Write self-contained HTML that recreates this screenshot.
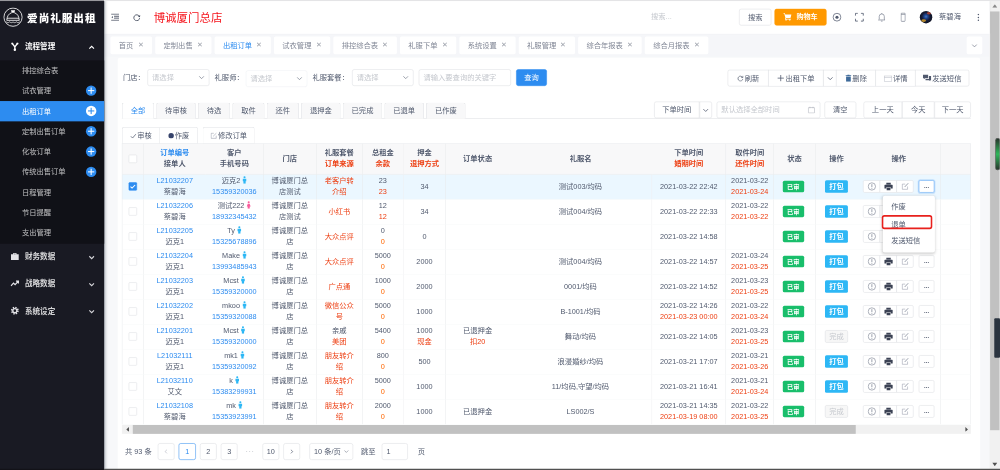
<!DOCTYPE html>
<html lang="zh-CN">
<head>
<meta charset="utf-8">
<title>爱尚礼服出租 - 出租订单</title>
<style>
*{box-sizing:border-box;margin:0;padding:0}
html,body{width:1000px;height:470px;overflow:hidden;background:#f7f8fa}
body{font-family:"Liberation Sans","Noto Sans CJK SC",sans-serif;font-size:14px;color:#515a6e;line-height:1.5}
#root{position:absolute;left:0;top:0;width:1920px;height:903px;transform:scale(0.5208333);transform-origin:0 0;filter:blur(0.800px);overflow:hidden;background:#f7f8fa}
.abs{position:absolute}
/* sidebar */
#side{position:absolute;left:0;top:0;width:200px;height:903px;background:#191a23;color:#fff;z-index:8;box-shadow:2px 0 6px rgba(0,21,41,.35)}
#logo{position:absolute;left:0;top:0;width:200px;height:64px}
#logo svg{position:absolute;left:6px;top:14px}
#logo b{position:absolute;left:52px;top:19px;font-size:20.5px;line-height:32px;font-weight:900;letter-spacing:1.7px;color:#fff;white-space:nowrap}
.m1{position:absolute;left:0;width:200px;height:52px;line-height:52px;color:#fff;font-size:14.5px;font-weight:700}
.m1 .ic{position:absolute;left:20px;top:17px;width:17px;height:17px}
.m1.dim{color:rgba(255,255,255,.82)}
.m1 span{position:absolute;left:48px;top:0}
.m1 .ar{position:absolute;left:170px;top:21px;width:12px;height:12px}
#sub{position:absolute;left:0;top:116px;width:200px;height:352px;background:#101117}
.m2{position:absolute;left:0;width:200px;height:39px;line-height:39px;color:rgba(255,255,255,.72);font-size:14px}
.m2 span{position:absolute;left:42px}
.m2.on{background:#2d8cf0;color:#fff}
.m2 i{position:absolute;left:165px;top:9px;width:20px;height:20px;border-radius:50%;background:#2d8cf0}
.m2.on i{background:#fff}
.m2 i:before{content:"";position:absolute;left:4px;top:9px;width:12px;height:2px;background:#fff}
.m2 i:after{content:"";position:absolute;left:9px;top:4px;width:2px;height:12px;background:#fff}
.m2.on i:before,.m2.on i:after{background:#2d8cf0}
/* header */
#head{position:absolute;left:200px;top:0;width:1700px;height:65px;z-index:5;background:#fff;box-shadow:0 1px 4px rgba(0,21,41,.08)}
#topline{position:absolute;left:0;top:0;width:1920px;height:2px;background:linear-gradient(90deg,#98989d 0,#98989d 200px,#e4e4e6 200px);z-index:9}
#title{position:absolute;left:95px;top:19px;font-size:22px;line-height:32px;color:#f5141c;white-space:nowrap}
.hbtn{position:absolute;top:17px;height:32px;line-height:30px;border:1px solid #dcdee2;border-radius:4px;text-align:center;font-size:14px;color:#515a6e;background:#fff}
/* page tabs */
#ptabs{position:absolute;left:200px;top:64px;width:1700px;height:45px;background:#f5f6f9}
.ptab{position:absolute;top:70px;height:34px;line-height:34px;background:#fff;border-radius:3px;color:#808695;font-size:14px;white-space:nowrap}
.ptab span{position:absolute;left:16px}
.ptab i{position:absolute;right:17px;top:0;font-style:normal;font-size:12.5px;color:#9a9fa9}
.ptab.act{color:#2d8cf0}
/* card */
#card{position:absolute;left:226px;top:111px;width:1656px;height:800px;background:#fff;border-radius:4px}
.lbl{position:absolute;top:133px;height:32px;line-height:32px;color:#515a6e;font-size:14px;white-space:nowrap}
.sel,.inp{position:absolute;height:32px;border:1px solid #dcdee2;border-radius:4px;background:#fff;line-height:30px;color:#c5c8ce;font-size:14px;padding-left:8px;white-space:nowrap}
.sel svg{position:absolute;right:8px;top:9px}
.btn{position:absolute;height:32px;line-height:30px;border:1px solid #dcdee2;background:#fff;color:#515a6e;font-size:14px;text-align:center;white-space:nowrap;border-radius:4px}
.btn.pri{background:#2d8cf0;border-color:#2d8cf0;color:#fff}
.btn svg{vertical-align:-2px;margin-right:2px}
.grp .btn{border-radius:0;margin-left:-1px}
.stab{position:absolute;top:197px;height:31px;line-height:28px;border:1px solid #dcdee2;border-bottom:0;border-radius:4px 4px 0 0;background:#f8f8f9;color:#515a6e;text-align:center;font-size:14px}
.stab.on{background:#fff;color:#2d8cf0;height:31px;z-index:2}
#stline{position:absolute;left:234px;top:227px;width:1630px;height:1px;background:#dcdee2}
/* table */
#tbl{position:absolute;left:234px;top:275px;width:1630px;border-collapse:separate;border-spacing:0;table-layout:fixed;font-size:14px;color:#515a6e;border-top:1px solid #e8eaec;border-left:1px solid #e8eaec}
#tbl th{height:59px;font-weight:700;text-align:center;line-height:21px;padding-bottom:2px !important;border-bottom:1px solid #e8eaec;color:#515a6e;padding:0;white-space:nowrap}
#tbl td{height:48px;text-align:center;line-height:21.5px;padding:0;border-bottom:1px solid #f7f8f9;white-space:nowrap;vertical-align:middle}
#tbl tr>:nth-child(1),#tbl tr>:nth-child(3),#tbl tr>:nth-child(4),#tbl tr>:nth-child(5),#tbl tr>:nth-child(7),#tbl tr>:nth-child(10),#tbl tr>:nth-child(11),#tbl tr>:nth-child(12),#tbl tr>:nth-child(14),#tbl tr>:nth-child(15){border-right:1px solid #e8eaec}
#tbl tr>:nth-child(6),#tbl td:nth-child(9){border-right:1px solid #eff0f2}

.blue{color:#2d8cf0}.red{color:#ed4014}.org{color:#f60}
td.store,td.src{white-space:normal !important}
#tbl td.two{padding-bottom:3px}
#tbl td.nb{padding-bottom:2px}
td.store{padding:0 10px 3px !important}
td.src{padding:0 12px !important}
td.src.two{padding:0 12px 3px !important}
.cb{display:inline-block;width:16px;height:16px;border:1px solid #dcdee2;border-radius:2px;background:#fff;vertical-align:middle}
.cb.on{background:#2d8cf0;border-color:#2d8cf0;position:relative}
.cb.on svg{position:absolute;left:-1px;top:-1px}
.sex{vertical-align:-2px}
.sex.m{fill:#2db7f5}.sex.f{fill:#f95d9c}
.sbtn{display:inline-block;height:24px;line-height:24px;border-radius:3px;color:#fff;font-weight:700;vertical-align:middle}
.sbtn.ok{background:#19be6b;margin-right:5px;width:41px;height:22px;line-height:22px;font-size:12px}
.sbtn.info{background:#2db7f5;width:44px;font-size:14px}
.sbtn.dis{background:#f7f7f7;border:1px solid #dcdee2;color:#c5c8ce;width:44px;line-height:22px;font-weight:400}
.agrp{display:inline-block;vertical-align:middle;height:24px;white-space:nowrap;font-size:0}
.mbtn{display:inline-block;width:33px;height:24px;border:1px solid #dcdee2;background:#fff;vertical-align:middle;margin-left:-1px;position:relative}
.agrp .mbtn:first-child{border-radius:3px 0 0 3px;margin-left:0}
.agrp .mbtn:last-child{border-radius:0 3px 3px 0}
.mbtn svg{position:absolute;left:50%;top:50%;transform:translate(-50%,-50%)}
.mbtn.more{width:30px;border-radius:3px;margin-left:10px;font-size:11px;line-height:22px;color:#515a6e;font-weight:700;letter-spacing:-.5px;text-align:center}
.mbtn.more.focus{border-color:#57a3f3;box-shadow:0 0 0 2px rgba(45,140,240,.2)}
/* dropdown */
#drop{position:absolute;left:1695px;top:376px;width:100px;height:109px;background:#fff;border-radius:4px;box-shadow:0 1px 6px rgba(0,0,0,.2);z-index:20;padding-top:5px}
#drop div{height:32.600px;line-height:32.600px;padding-left:16px;font-size:14px;color:#515a6e}
#redbox{position:absolute;left:1693px;top:413px;width:97px;height:27px;border:3px solid #e8211d;border-radius:5px;z-index:21}
/* pagination */
.pg{position:absolute;top:851px;height:32px;min-width:32px;line-height:30px;border:1px solid #dcdee2;border-radius:4px;background:#fff;text-align:center;font-size:14px;color:#515a6e}
.pg.on{border-color:#2d8cf0;color:#2d8cf0}
.pt{position:absolute;top:851px;height:32px;line-height:32px;font-size:14px;color:#515a6e;white-space:nowrap}
/* scrollbars */
#hscroll{position:absolute;left:234px;top:816px;width:1630px;height:17px;background:#f1f1f1}
#hscroll .th{position:absolute;left:21px;top:0px;width:1388px;height:17px;background:#c1c1c1}
#vscroll{position:absolute;left:1900px;top:0;width:20px;height:903px;background:#f1f1f1}
#vscroll .th{position:absolute;left:1px;top:22px;width:18px;height:804px;background:#c1c1c1}
#botline{position:absolute;left:0;top:900px;width:1920px;height:3px;background:linear-gradient(90deg,#121218 0,#121218 200px,#505050 200px);z-index:30}
</style>
</head>
<body>
<div id="root">

<!-- ============ sidebar ============ -->
<div id="side">
  <div id="logo">
    <svg width="38" height="38" viewBox="0 0 38 38" fill="none" stroke="#fff" stroke-width="1.6">
      <circle cx="19" cy="19" r="17.5"/>
      <path d="M15 5.5h8l-1.5 5h-5z" fill="#fff" stroke="none"/>
      <path d="M16.5 10.5c-6 1.5-9 7-9.500 14.500h24c-.5-7.500-3.500-13-9.500-14.500"/>
      <path d="M7.500 21h23"/>
      <path d="M6 28c2 2 4 2 6.500 0 2.500 2 4.500 2 6.500 0 2 2 4 2 6.500 0 2.500 2 4.500 2 6.500 0" stroke-width="1.3"/>
    </svg>
    <b>爱尚礼服出租</b>
  </div>
  <div class="m1" style="top:64px">
    <svg class="ic" viewBox="0 0 16 16" fill="none" stroke="#fff" stroke-width="2.600"><path d="M3.500 2.500l4.500 6 4.500-6M8 8V13"/><circle cx="3.300" cy="2.300" r="1.900" fill="#fff" stroke="none"/><circle cx="12.700" cy="2.300" r="1.900" fill="#fff" stroke="none"/><circle cx="8" cy="13.600" r="2.200" fill="#fff" stroke="none"/></svg>
    <span>流程管理</span>
    <svg class="ar" viewBox="0 0 12 12" fill="none" stroke="#fff" stroke-width="2.200"><path d="M1.500 8.500L6 4l4.500 4.500"/></svg>
  </div>
  <div id="sub">
    <div class="m2" style="top:0"><span>排控综合表</span></div>
    <div class="m2" style="top:39px"><span>试衣管理</span><i></i></div>
    <div class="m2 on" style="top:78px"><span>出租订单</span><i></i></div>
    <div class="m2" style="top:117px"><span>定制出售订单</span><i></i></div>
    <div class="m2" style="top:156px"><span>化妆订单</span><i></i></div>
    <div class="m2" style="top:195px"><span>传统出售订单</span><i></i></div>
    <div class="m2" style="top:234px"><span>日程管理</span></div>
    <div class="m2" style="top:273px"><span>节日提醒</span></div>
    <div class="m2" style="top:312px"><span>支出管理</span></div>
  </div>
  <div class="m1 dim" style="top:467px">
    <svg class="ic" viewBox="0 0 16 16" fill="#e4e4e8"><path d="M5 1.500h6V4h4v10.500H1V4h4zM6.600 2.900V4h2.800V2.900z"/></svg>
    <span>财务数据</span>
    <svg class="ar" viewBox="0 0 12 12" fill="none" stroke="#d4d4d8" stroke-width="2.200"><path d="M1.500 4L6 8.500 10.500 4"/></svg>
  </div>
  <div class="m1 dim" style="top:519px">
    <svg class="ic" viewBox="0 0 16 16" fill="none" stroke="#e4e4e8" stroke-width="2.200"><path d="M1 12l4.500-5 3 3L14 4M10 3.500h4.500V8"/></svg>
    <span>战略数据</span>
    <svg class="ar" viewBox="0 0 12 12" fill="none" stroke="#d4d4d8" stroke-width="2.200"><path d="M1.500 4L6 8.500 10.500 4"/></svg>
  </div>
  <div class="m1 dim" style="top:571px">
    <svg class="ic" viewBox="0 0 16 16" fill="none" stroke="#e0e0e4"><circle cx="8" cy="8" r="5.600" stroke-width="3" stroke-dasharray="2.500 1.900"/><circle cx="8" cy="8" r="3.700" stroke-width="2.600"/></svg>
    <span>系统设定</span>
    <svg class="ar" viewBox="0 0 12 12" fill="none" stroke="#d4d4d8" stroke-width="2.200"><path d="M1.500 4L6 8.500 10.500 4"/></svg>
  </div>
</div>

<!-- ============ header ============ -->
<div id="head">
  <svg class="abs" style="left:13px;top:26px" width="16" height="14" viewBox="0 0 16 14" fill="none" stroke="#3f4759" stroke-width="1.700"><path d="M.5 1h15M6 5.200h9.500M6 8.800h9.500M.5 13h15"/><path d="M3.600 4.800L1 7l2.600 2.200z" fill="#3f4759" stroke="none"/></svg>
  <svg class="abs" style="left:55px;top:26px" width="15" height="15" viewBox="0 0 16 16" fill="none" stroke="#3f4759" stroke-width="1.700"><path d="M13.200 5.500A6 6 0 1 0 14 9.500"/><path d="M15.500 3.200l-1 4.300-4-1.600z" fill="#3f4759" stroke="none"/></svg>
  <div id="title">博诚厦门总店</div>
  <div class="abs" style="left:1050px;top:22px;color:#c5c8ce;font-size:14px">搜索...</div>
  <div class="hbtn" style="left:1219px;width:62px">搜索</div>
  <div class="hbtn" style="left:1287px;width:100px;background:#ff9900;border-color:#ff9900;color:#fff;font-weight:700;font-size:13.500px"><svg width="16" height="15" viewBox="0 0 16 15" style="vertical-align:-3px;margin-right:9px" fill="#fff"><path d="M0 .5h3l.7 2.300h12l-2 6.700H5.300l-.2 1.300h9.400v1.500H3.300l.6-3.200L2 2H0zM5.200 12.200a1.400 1.400 0 1 0 0 2.800 1.400 1.400 0 0 0 0-2.800zM12.300 12.200a1.400 1.400 0 1 0 0 2.800 1.400 1.400 0 0 0 0-2.800z"/></svg>购物车</div>
  <svg class="abs" style="left:1398px;top:24px" width="18" height="18" viewBox="0 0 18 18" fill="none" stroke="#515a6e" stroke-width="1.400"><circle cx="9" cy="9" r="7.500"/><circle cx="9" cy="9" r="3" fill="#515a6e" stroke="none"/></svg>
  <svg class="abs" style="left:1441px;top:24px" width="18" height="18" viewBox="0 0 18 18" fill="none" stroke="#515a6e" stroke-width="1.600"><path d="M1.500 6V1.500H6M12 1.500h4.500V6M16.500 12v4.500H12M6 16.500H1.500V12"/></svg>
  <svg class="abs" style="left:1485px;top:24px" width="16" height="18" viewBox="0 0 18 20" fill="none" stroke="#7a8191" stroke-width="1.500"><path d="M3.500 14.500V8.500a5.500 5.500 0 0 1 11 0v6l1.500 1.500H2zM7.200 18.500h3.600M9 1v2"/></svg>
  <svg class="abs" style="left:1529px;top:24px" width="10" height="18" viewBox="0 0 10 18" fill="none" stroke="#7a8191" stroke-width="1.400"><rect x="1" y="1" width="8" height="16" rx="1.500"/><path d="M1 3.500h8"/></svg>
  <div class="abs" style="left:1566px;top:21px;width:24px;height:24px;border-radius:50%;background:radial-gradient(circle at 50% 45%,#3a78c8 0,#1f3f86 22%,#141a33 45%,#0b0d16 100%);overflow:hidden">
    <div class="abs" style="left:14px;top:2px;width:7px;height:5px;border-radius:50%;background:#b8432f;opacity:.85"></div>
    <div class="abs" style="left:3px;top:16px;width:9px;height:5px;border-radius:50%;background:#c9962a;opacity:.9"></div>
  </div>
  <div class="abs" style="left:1603px;top:21px;font-size:14px;color:#515a6e">蔡碧海</div>
  <svg class="abs" style="left:1676px;top:26px" width="5" height="15" viewBox="0 0 5 15" fill="#515a6e"><circle cx="2.500" cy="2" r="1.400"/><circle cx="2.500" cy="7.500" r="1.400"/><circle cx="2.500" cy="13" r="1.400"/></svg>
</div>

<!-- ============ page tabs ============ -->
<div id="ptabs"></div>
<div class="ptab" style="left:212px;width:80px"><span>首页</span><i>✕</i></div><div class="ptab" style="left:298px;width:108px"><span>定制出售</span><i>✕</i></div><div class="ptab act" style="left:412px;width:108px"><span>出租订单</span><i>✕</i></div><div class="ptab" style="left:526px;width:108px"><span>试衣管理</span><i>✕</i></div><div class="ptab" style="left:640px;width:122px"><span>排控综合表</span><i>✕</i></div><div class="ptab" style="left:768px;width:108px"><span>礼服下单</span><i>✕</i></div><div class="ptab" style="left:882px;width:108px"><span>系统设置</span><i>✕</i></div><div class="ptab" style="left:996px;width:108px"><span>礼服管理</span><i>✕</i></div><div class="ptab" style="left:1110px;width:122px"><span>综合年报表</span><i>✕</i></div><div class="ptab" style="left:1238px;width:122px"><span>综合月报表</span><i>✕</i></div>
<div class="abs" style="left:1856px;top:70px;width:30px;height:34px;background:#fff;border-radius:3px">
  <svg class="abs" style="left:9px;top:12px" width="12" height="12" viewBox="0 0 12 12" fill="none" stroke="#808695" stroke-width="1.500"><path d="M1.500 3.500L6 8l4.500-4.500"/></svg>
</div>

<!-- ============ card ============ -->
<div id="card"></div>

<!-- filter row -->
<div class="lbl" style="left:236px">门店：</div>
<div class="sel" style="left:283px;top:133px;width:119px">请选择<svg width="12" height="12" viewBox="0 0 12 12" fill="none" stroke="#808695" stroke-width="1.500"><path d="M1.500 3.500L6 8l4.500-4.500"/></svg></div>
<div class="lbl" style="left:412px">礼服师：</div>
<div class="sel" style="left:472px;top:135px;width:118px;border-color:#eef0f3">请选择<svg width="12" height="12" viewBox="0 0 12 12" fill="none" stroke="#808695" stroke-width="1.500"><path d="M1.500 3.500L6 8l4.500-4.500"/></svg></div>
<div class="lbl" style="left:600px">礼服套餐：</div>
<div class="sel" style="left:676px;top:133px;width:118px">请选择<svg width="12" height="12" viewBox="0 0 12 12" fill="none" stroke="#808695" stroke-width="1.500"><path d="M1.500 3.500L6 8l4.500-4.500"/></svg></div>
<div class="inp" style="left:804px;top:133px;width:177px">请输入要查询的关键字</div>
<div class="btn pri" style="left:991px;top:133px;width:59px">查询</div>

<!-- top-right button group -->
<div class="grp">
  <div class="btn" style="left:1398px;top:134px;width:79px;border-radius:4px 0 0 4px"><svg width="13" height="13" viewBox="0 0 14 14" fill="none" stroke="#515a6e" stroke-width="1.400"><path d="M11.500 5A5 5 0 1 0 12 8.500"/><path d="M12.200 1.800v3.500H8.700"/></svg>刷新</div>
  <div class="btn" style="left:1476px;top:134px;width:106px"><svg width="14" height="14" viewBox="0 0 14 14" fill="none" stroke="#515a6e" stroke-width="1.500"><path d="M7 1v12M1 7h12"/></svg>出租下单</div>
  <div class="btn" style="left:1582px;top:134px;width:25px"><svg width="12" height="12" viewBox="0 0 12 12" fill="none" stroke="#515a6e" stroke-width="1.500" style="margin:0"><path d="M1.500 3.500L6 8l4.500-4.500"/></svg></div>
  <div class="btn" style="left:1606px;top:134px;width:77px"><svg width="12" height="14" viewBox="0 0 12 14" fill="#3e6a9a"><path d="M4 0h4v1.500h3.500V3H.5V1.500H4zM1.500 4h9v10h-9z"/></svg>删除</div>
  <div class="btn" style="left:1682px;top:134px;width:77px"><svg width="16" height="12" viewBox="0 0 16 12" fill="none" stroke="#b8bcc6" stroke-width="1.200"><rect x=".6" y=".6" width="14.800" height="10.800"/><path d="M.6 3.500h14.800"/></svg>详情</div>
  <div class="btn" style="left:1758px;top:134px;width:104px;border-radius:0 4px 4px 0"><svg width="16" height="14" viewBox="0 0 16 14" fill="#515a6e"><path d="M0 0h10v7H4L2 9V7H0zM5 8.500h6.500V3H16v8h-2v2l-2-2H5z"/></svg>发送短信</div>
</div>

<!-- status tabs -->
<div id="stline"></div>
<div class="stab on" style="left:234px;width:62px">全部</div>
<div class="stab" style="left:300px;width:76px">待审核</div>
<div class="stab" style="left:380px;width:62px">待选</div>
<div class="stab" style="left:446px;width:62px">取件</div>
<div class="stab" style="left:512px;width:62px">还件</div>
<div class="stab" style="left:578px;width:76px">退押金</div>
<div class="stab" style="left:658px;width:76px">已完成</div>
<div class="stab" style="left:738px;width:76px">已退单</div>
<div class="stab" style="left:818px;width:76px">已作废</div>

<!-- right of status tabs -->
<div class="grp">
  <div class="btn" style="left:1257px;top:195px;width:87px;border-radius:4px 0 0 4px">下单时间</div>
  <div class="btn" style="left:1344px;top:195px;width:24px;border-radius:0 4px 4px 0"><svg width="12" height="12" viewBox="0 0 12 12" fill="none" stroke="#515a6e" stroke-width="1.500" style="margin:0"><path d="M1.500 3.500L6 8l4.500-4.500"/></svg></div>
</div>
<div class="inp" style="left:1376px;top:195px;width:199px">默认选择全部时间<svg class="abs" style="right:9px;top:8px" width="14" height="14" viewBox="0 0 14 14" fill="none" stroke="#b0b4bd" stroke-width="1.200"><rect x="1" y="2.500" width="12" height="10.500" rx="1"/><path d="M4 .8v3M10 .8v3"/></svg></div>
<div class="btn" style="left:1583px;top:195px;width:61px">清空</div>
<div class="grp">
  <div class="btn" style="left:1659px;top:195px;width:74px;border-radius:4px 0 0 4px">上一天</div>
  <div class="btn" style="left:1733px;top:195px;width:62px">今天</div>
  <div class="btn" style="left:1795px;top:195px;width:70px;border-radius:0 4px 4px 0">下一天</div>
</div>

<!-- buttons above table -->
<div class="grp">
  <div class="btn" style="left:235px;top:244px;width:73px;border-radius:4px 0 0 0;border-bottom-color:#e8eaec"><svg width="12" height="12" viewBox="0 0 12 12" fill="none" stroke="#515a6e" stroke-width="1.400"><path d="M1 6.500L4.500 10 11 2.500"/></svg>审核</div>
  <div class="btn" style="left:307px;top:244px;width:74px;border-radius:0 4px 0 0;border-bottom-color:#e8eaec"><svg width="11" height="11" viewBox="0 0 14 14" fill="#36436b" style="vertical-align:-1px"><circle cx="7" cy="7" r="6.800"/></svg>作废</div>
</div>
<div class="btn" style="left:389px;top:244px;width:100px;border-radius:4px 4px 0 0;border-bottom-color:#e8eaec"><svg width="13" height="13" viewBox="0 0 14 14" fill="none" stroke="#9aa0ae" stroke-width="1.200"><path d="M12 7v5.500H1.500V2H7"/><path d="M5.500 8.500L12.500 1.500"/></svg>修改订单</div>

<!-- ============ table ============ -->
<div class="abs" style="left:234px;top:276px;width:1630px;height:59px;background:#f8f8f9"></div>
<div class="abs" style="left:234px;top:335px;width:1630px;height:48px;background:#ebf7ff"></div>
<table id="tbl">
<colgroup><col style="width:41px"><col style="width:119px"><col style="width:111px"><col style="width:102px"><col style="width:88px"><col style="width:79px"><col style="width:81px"><col style="width:122px"><col style="width:274px"><col style="width:142px"><col style="width:92px"><col style="width:80px"><col style="width:80px"><col style="width:160px"><col></colgroup>
<thead><tr>
<th><span class="cb"></span></th>
<th><div class="blue">订单编号</div><div>接单人</div></th>
<th><div>客户</div><div>手机号码</div></th>
<th>门店</th>
<th><div>礼服套餐</div><div class="red">订单来源</div></th>
<th><div>总租金</div><div class="red">余款</div></th>
<th><div>押金</div><div class="red">退押方式</div></th>
<th>订单状态</th>
<th>礼服名</th>
<th><div>下单时间</div><div class="red">婚期时间</div></th>
<th><div>取件时间</div><div class="red">还件时间</div></th>
<th>状态</th>
<th>操作</th>
<th>操作</th>
<th></th>
</tr></thead>
<tbody>
<tr class="rsel"><td class="c0 nb"><span class="cb on"><svg viewBox="0 0 16 16" width="16" height="16"><path d="M3.6 8.2l3 3 5.8-6" fill="none" stroke="#fff" stroke-width="2"/></svg></span></td><td class="two"><div class="blue">L21032207</div><div>蔡碧海</div></td><td class="two"><div>迈克2 <svg class="sex m" viewBox="0 0 10 16" width="9" height="15"><circle cx="5" cy="2.4" r="2.2"/><path d="M1.2 5.6h7.6v5.2H7.4V16H2.6v-5.2H1.2z"/></svg></div><div class="blue">15359320036</div></td><td class="store two">博诚厦门总店测试</td><td class="src two"><div class="red">老客户转介绍</div></td><td class="two"><div>23</div><div class="red">23</div></td><td><div>34</div></td><td></td><td>测试003/均码</td><td><div>2021-03-22 22:42</div></td><td class="two"><div>2021-03-22</div><div class="red">2021-03-24</div></td><td class="nb"><span class="sbtn ok">已审</span></td><td class="nb"><span class="sbtn info">打包</span></td><td class="act nb"><span class="agrp"><span class="mbtn"><svg viewBox="0 0 16 16" width="17" height="17"><circle cx="8" cy="8" r="6.6" fill="none" stroke="#6b7385" stroke-width="1"/><path d="M8 3.8v5.6M8 10.8v1.4" stroke="#6b7385" stroke-width="1.2"/></svg></span><span class="mbtn"><svg viewBox="0 0 16 16" width="17" height="17"><path d="M4 1.5h8v3H4zM1.5 5h13a1 1 0 0 1 1 1v5.5H12V9.3H4v2.2H.5V6a1 1 0 0 1 1-1zM4.6 10.3h6.8v4.4H4.6z" fill="#3b4254"/></svg></span><span class="mbtn"><svg viewBox="0 0 16 16" width="16" height="16"><path d="M12.5 8v5.5H2.5V3.5H8" fill="none" stroke="#9097a6" stroke-width="1"/><path d="M7 9L13.8 1.8" stroke="#6b7385" stroke-width="1.3"/></svg></span></span><span class="mbtn more focus">···</span></td><td></td></tr>
<tr><td class="c0 nb"><span class="cb"></span></td><td class="two"><div class="blue">L21032206</div><div>蔡碧海</div></td><td class="two"><div>测试222 <svg class="sex f" viewBox="0 0 10 16" width="9" height="15"><circle cx="5" cy="2.4" r="2.2"/><path d="M3 5.4h4l2.2 6H7.2V16H2.8v-4.6H.8z"/></svg></div><div class="blue">18932345432</div></td><td class="store two">博诚厦门总店测试</td><td class="src"><div class="red">小红书</div></td><td class="two"><div>12</div><div class="red">12</div></td><td><div>34</div></td><td></td><td>测试004/均码</td><td><div>2021-03-22 22:33</div></td><td class="two"><div>2021-03-22</div><div class="red">2021-03-22</div></td><td class="nb"><span class="sbtn ok">已审</span></td><td class="nb"><span class="sbtn info">打包</span></td><td class="act nb"><span class="agrp"><span class="mbtn"><svg viewBox="0 0 16 16" width="17" height="17"><circle cx="8" cy="8" r="6.6" fill="none" stroke="#6b7385" stroke-width="1"/><path d="M8 3.8v5.6M8 10.8v1.4" stroke="#6b7385" stroke-width="1.2"/></svg></span><span class="mbtn"><svg viewBox="0 0 16 16" width="17" height="17"><path d="M4 1.5h8v3H4zM1.5 5h13a1 1 0 0 1 1 1v5.5H12V9.3H4v2.2H.5V6a1 1 0 0 1 1-1zM4.6 10.3h6.8v4.4H4.6z" fill="#3b4254"/></svg></span><span class="mbtn"><svg viewBox="0 0 16 16" width="16" height="16"><path d="M12.5 8v5.5H2.5V3.5H8" fill="none" stroke="#9097a6" stroke-width="1"/><path d="M7 9L13.8 1.8" stroke="#6b7385" stroke-width="1.3"/></svg></span></span><span class="mbtn more">···</span></td><td></td></tr>
<tr><td class="c0 nb"><span class="cb"></span></td><td class="two"><div class="blue">L21032205</div><div>迈克1</div></td><td class="two"><div>Ty <svg class="sex m" viewBox="0 0 10 16" width="9" height="15"><circle cx="5" cy="2.4" r="2.2"/><path d="M1.2 5.6h7.6v5.2H7.4V16H2.6v-5.2H1.2z"/></svg></div><div class="blue">15325678896</div></td><td class="store two">博诚厦门总店</td><td class="src"><div class="red">大众点评</div></td><td class="two"><div>0</div><div class="org">0</div></td><td><div>0</div></td><td></td><td></td><td><div>2021-03-22 14:58</div></td><td></td><td class="nb"><span class="sbtn ok">已审</span></td><td class="nb"><span class="sbtn info">打包</span></td><td class="act nb"><span class="agrp"><span class="mbtn"><svg viewBox="0 0 16 16" width="17" height="17"><circle cx="8" cy="8" r="6.6" fill="none" stroke="#6b7385" stroke-width="1"/><path d="M8 3.8v5.6M8 10.8v1.4" stroke="#6b7385" stroke-width="1.2"/></svg></span><span class="mbtn"><svg viewBox="0 0 16 16" width="17" height="17"><path d="M4 1.5h8v3H4zM1.5 5h13a1 1 0 0 1 1 1v5.5H12V9.3H4v2.2H.5V6a1 1 0 0 1 1-1zM4.6 10.3h6.8v4.4H4.6z" fill="#3b4254"/></svg></span><span class="mbtn"><svg viewBox="0 0 16 16" width="16" height="16"><path d="M12.5 8v5.5H2.5V3.5H8" fill="none" stroke="#9097a6" stroke-width="1"/><path d="M7 9L13.8 1.8" stroke="#6b7385" stroke-width="1.3"/></svg></span></span><span class="mbtn more">···</span></td><td></td></tr>
<tr><td class="c0 nb"><span class="cb"></span></td><td class="two"><div class="blue">L21032204</div><div>迈克1</div></td><td class="two"><div>Make <svg class="sex m" viewBox="0 0 10 16" width="9" height="15"><circle cx="5" cy="2.4" r="2.2"/><path d="M1.2 5.6h7.6v5.2H7.4V16H2.6v-5.2H1.2z"/></svg></div><div class="blue">13993485943</div></td><td class="store two">博诚厦门总店</td><td class="src"><div class="red">大众点评</div></td><td class="two"><div>5000</div><div class="org">0</div></td><td><div>2000</div></td><td></td><td>测试004/均码</td><td><div>2021-03-22 14:57</div></td><td class="two"><div>2021-03-24</div><div class="red">2021-03-25</div></td><td class="nb"><span class="sbtn ok">已审</span></td><td class="nb"><span class="sbtn info">打包</span></td><td class="act nb"><span class="agrp"><span class="mbtn"><svg viewBox="0 0 16 16" width="17" height="17"><circle cx="8" cy="8" r="6.6" fill="none" stroke="#6b7385" stroke-width="1"/><path d="M8 3.8v5.6M8 10.8v1.4" stroke="#6b7385" stroke-width="1.2"/></svg></span><span class="mbtn"><svg viewBox="0 0 16 16" width="17" height="17"><path d="M4 1.5h8v3H4zM1.5 5h13a1 1 0 0 1 1 1v5.5H12V9.3H4v2.2H.5V6a1 1 0 0 1 1-1zM4.6 10.3h6.8v4.4H4.6z" fill="#3b4254"/></svg></span><span class="mbtn"><svg viewBox="0 0 16 16" width="16" height="16"><path d="M12.5 8v5.5H2.5V3.5H8" fill="none" stroke="#9097a6" stroke-width="1"/><path d="M7 9L13.8 1.8" stroke="#6b7385" stroke-width="1.3"/></svg></span></span><span class="mbtn more">···</span></td><td></td></tr>
<tr><td class="c0 nb"><span class="cb"></span></td><td class="two"><div class="blue">L21032203</div><div>迈克1</div></td><td class="two"><div>Mcst <svg class="sex m" viewBox="0 0 10 16" width="9" height="15"><circle cx="5" cy="2.4" r="2.2"/><path d="M1.2 5.6h7.6v5.2H7.4V16H2.6v-5.2H1.2z"/></svg></div><div class="blue">15359320000</div></td><td class="store two">博诚厦门总店</td><td class="src"><div class="red">广点通</div></td><td class="two"><div>1000</div><div class="org">0</div></td><td><div>2000</div></td><td></td><td>0001/均码</td><td><div>2021-03-22 14:52</div></td><td class="two"><div>2021-03-23</div><div class="red">2021-03-25</div></td><td class="nb"><span class="sbtn ok">已审</span></td><td class="nb"><span class="sbtn info">打包</span></td><td class="act nb"><span class="agrp"><span class="mbtn"><svg viewBox="0 0 16 16" width="17" height="17"><circle cx="8" cy="8" r="6.6" fill="none" stroke="#6b7385" stroke-width="1"/><path d="M8 3.8v5.6M8 10.8v1.4" stroke="#6b7385" stroke-width="1.2"/></svg></span><span class="mbtn"><svg viewBox="0 0 16 16" width="17" height="17"><path d="M4 1.5h8v3H4zM1.5 5h13a1 1 0 0 1 1 1v5.5H12V9.3H4v2.2H.5V6a1 1 0 0 1 1-1zM4.6 10.3h6.8v4.4H4.6z" fill="#3b4254"/></svg></span><span class="mbtn"><svg viewBox="0 0 16 16" width="16" height="16"><path d="M12.5 8v5.5H2.5V3.5H8" fill="none" stroke="#9097a6" stroke-width="1"/><path d="M7 9L13.8 1.8" stroke="#6b7385" stroke-width="1.3"/></svg></span></span><span class="mbtn more">···</span></td><td></td></tr>
<tr><td class="c0 nb"><span class="cb"></span></td><td class="two"><div class="blue">L21032202</div><div>迈克1</div></td><td class="two"><div>mkoo <svg class="sex m" viewBox="0 0 10 16" width="9" height="15"><circle cx="5" cy="2.4" r="2.2"/><path d="M1.2 5.6h7.6v5.2H7.4V16H2.6v-5.2H1.2z"/></svg></div><div class="blue">15359320088</div></td><td class="store two">博诚厦门总店</td><td class="src two"><div class="red">微信公众号</div></td><td class="two"><div>5000</div><div class="org">0</div></td><td><div>1000</div></td><td></td><td>B-1001/均码</td><td class="two"><div>2021-03-22 14:26</div><div class="red">2021-03-23 00:00</div></td><td class="two"><div>2021-03-22</div><div class="red">2021-03-24</div></td><td class="nb"><span class="sbtn ok">已审</span></td><td class="nb"><span class="sbtn info">打包</span></td><td class="act nb"><span class="agrp"><span class="mbtn"><svg viewBox="0 0 16 16" width="17" height="17"><circle cx="8" cy="8" r="6.6" fill="none" stroke="#6b7385" stroke-width="1"/><path d="M8 3.8v5.6M8 10.8v1.4" stroke="#6b7385" stroke-width="1.2"/></svg></span><span class="mbtn"><svg viewBox="0 0 16 16" width="17" height="17"><path d="M4 1.5h8v3H4zM1.5 5h13a1 1 0 0 1 1 1v5.5H12V9.3H4v2.2H.5V6a1 1 0 0 1 1-1zM4.6 10.3h6.8v4.4H4.6z" fill="#3b4254"/></svg></span><span class="mbtn"><svg viewBox="0 0 16 16" width="16" height="16"><path d="M12.5 8v5.5H2.5V3.5H8" fill="none" stroke="#9097a6" stroke-width="1"/><path d="M7 9L13.8 1.8" stroke="#6b7385" stroke-width="1.3"/></svg></span></span><span class="mbtn more">···</span></td><td></td></tr>
<tr><td class="c0 nb"><span class="cb"></span></td><td class="two"><div class="blue">L21032201</div><div>迈克1</div></td><td class="two"><div>Mcst <svg class="sex m" viewBox="0 0 10 16" width="9" height="15"><circle cx="5" cy="2.4" r="2.2"/><path d="M1.2 5.6h7.6v5.2H7.4V16H2.6v-5.2H1.2z"/></svg></div><div class="blue">15359320000</div></td><td class="store two">博诚厦门总店</td><td class="src two"><div>亲戚</div><div class="red">美团</div></td><td class="two"><div>5400</div><div class="org">0</div></td><td class="two"><div>1000</div><div class="red">现金</div></td><td class="two"><div>已退押金</div><div class="red">扣20</div></td><td>舞动/均码</td><td><div>2021-03-22 14:05</div></td><td class="two"><div>2021-03-23</div><div class="red">2021-03-25</div></td><td class="nb"><span class="sbtn ok">已审</span></td><td class="nb"><span class="sbtn dis">完成</span></td><td class="act nb"><span class="agrp"><span class="mbtn"><svg viewBox="0 0 16 16" width="17" height="17"><circle cx="8" cy="8" r="6.6" fill="none" stroke="#6b7385" stroke-width="1"/><path d="M8 3.8v5.6M8 10.8v1.4" stroke="#6b7385" stroke-width="1.2"/></svg></span><span class="mbtn"><svg viewBox="0 0 16 16" width="17" height="17"><path d="M4 1.5h8v3H4zM1.5 5h13a1 1 0 0 1 1 1v5.5H12V9.3H4v2.2H.5V6a1 1 0 0 1 1-1zM4.6 10.3h6.8v4.4H4.6z" fill="#3b4254"/></svg></span><span class="mbtn"><svg viewBox="0 0 16 16" width="16" height="16"><path d="M12.5 8v5.5H2.5V3.5H8" fill="none" stroke="#9097a6" stroke-width="1"/><path d="M7 9L13.8 1.8" stroke="#6b7385" stroke-width="1.3"/></svg></span></span><span class="mbtn more">···</span></td><td></td></tr>
<tr><td class="c0 nb"><span class="cb"></span></td><td class="two"><div class="blue">L21032111</div><div>迈克1</div></td><td class="two"><div>mk1 <svg class="sex m" viewBox="0 0 10 16" width="9" height="15"><circle cx="5" cy="2.4" r="2.2"/><path d="M1.2 5.6h7.6v5.2H7.4V16H2.6v-5.2H1.2z"/></svg></div><div class="blue">15359320092</div></td><td class="store two">博诚厦门总店</td><td class="src two"><div class="red">朋友转介绍</div></td><td class="two"><div>800</div><div class="org">0</div></td><td><div>500</div></td><td></td><td>浪漫婚纱/均码</td><td><div>2021-03-21 17:07</div></td><td class="two"><div>2021-03-21</div><div class="red">2021-03-26</div></td><td class="nb"><span class="sbtn ok">已审</span></td><td class="nb"><span class="sbtn info">打包</span></td><td class="act nb"><span class="agrp"><span class="mbtn"><svg viewBox="0 0 16 16" width="17" height="17"><circle cx="8" cy="8" r="6.6" fill="none" stroke="#6b7385" stroke-width="1"/><path d="M8 3.8v5.6M8 10.8v1.4" stroke="#6b7385" stroke-width="1.2"/></svg></span><span class="mbtn"><svg viewBox="0 0 16 16" width="17" height="17"><path d="M4 1.5h8v3H4zM1.5 5h13a1 1 0 0 1 1 1v5.5H12V9.3H4v2.2H.5V6a1 1 0 0 1 1-1zM4.6 10.3h6.8v4.4H4.6z" fill="#3b4254"/></svg></span><span class="mbtn"><svg viewBox="0 0 16 16" width="16" height="16"><path d="M12.5 8v5.5H2.5V3.5H8" fill="none" stroke="#9097a6" stroke-width="1"/><path d="M7 9L13.8 1.8" stroke="#6b7385" stroke-width="1.3"/></svg></span></span><span class="mbtn more">···</span></td><td></td></tr>
<tr><td class="c0 nb"><span class="cb"></span></td><td class="two"><div class="blue">L21032110</div><div>艾文</div></td><td class="two"><div>k <svg class="sex m" viewBox="0 0 10 16" width="9" height="15"><circle cx="5" cy="2.4" r="2.2"/><path d="M1.2 5.6h7.6v5.2H7.4V16H2.6v-5.2H1.2z"/></svg></div><div class="blue">15383299931</div></td><td class="store two">博诚厦门总店</td><td class="src two"><div class="red">朋友转介绍</div></td><td class="two"><div>5000</div><div class="org">0</div></td><td><div>1000</div></td><td></td><td>11/均码,守望/均码</td><td><div>2021-03-21 16:41</div></td><td class="two"><div>2021-03-21</div><div class="red">2021-03-24</div></td><td class="nb"><span class="sbtn ok">已审</span></td><td class="nb"><span class="sbtn info">打包</span></td><td class="act nb"><span class="agrp"><span class="mbtn"><svg viewBox="0 0 16 16" width="17" height="17"><circle cx="8" cy="8" r="6.6" fill="none" stroke="#6b7385" stroke-width="1"/><path d="M8 3.8v5.6M8 10.8v1.4" stroke="#6b7385" stroke-width="1.2"/></svg></span><span class="mbtn"><svg viewBox="0 0 16 16" width="17" height="17"><path d="M4 1.5h8v3H4zM1.5 5h13a1 1 0 0 1 1 1v5.5H12V9.3H4v2.2H.5V6a1 1 0 0 1 1-1zM4.6 10.3h6.8v4.4H4.6z" fill="#3b4254"/></svg></span><span class="mbtn"><svg viewBox="0 0 16 16" width="16" height="16"><path d="M12.5 8v5.5H2.5V3.5H8" fill="none" stroke="#9097a6" stroke-width="1"/><path d="M7 9L13.8 1.8" stroke="#6b7385" stroke-width="1.3"/></svg></span></span><span class="mbtn more">···</span></td><td></td></tr>
<tr><td class="c0 nb"><span class="cb"></span></td><td class="two"><div class="blue">L21032108</div><div>蔡碧海</div></td><td class="two"><div>mk <svg class="sex m" viewBox="0 0 10 16" width="9" height="15"><circle cx="5" cy="2.4" r="2.2"/><path d="M1.2 5.6h7.6v5.2H7.4V16H2.6v-5.2H1.2z"/></svg></div><div class="blue">15353923991</div></td><td class="store two">博诚厦门总店</td><td class="src two"><div class="red">朋友转介绍</div></td><td class="two"><div>2000</div><div class="org">0</div></td><td><div>1000</div></td><td><div>已退押金</div></td><td>LS002/S</td><td class="two"><div>2021-03-21 14:35</div><div class="red">2021-03-19 08:00</div></td><td class="two"><div>2021-03-22</div><div class="red">2021-03-25</div></td><td class="nb"><span class="sbtn ok">已审</span></td><td class="nb"><span class="sbtn dis">完成</span></td><td class="act nb"><span class="agrp"><span class="mbtn"><svg viewBox="0 0 16 16" width="17" height="17"><circle cx="8" cy="8" r="6.6" fill="none" stroke="#6b7385" stroke-width="1"/><path d="M8 3.8v5.6M8 10.8v1.4" stroke="#6b7385" stroke-width="1.2"/></svg></span><span class="mbtn"><svg viewBox="0 0 16 16" width="17" height="17"><path d="M4 1.5h8v3H4zM1.5 5h13a1 1 0 0 1 1 1v5.5H12V9.3H4v2.2H.5V6a1 1 0 0 1 1-1zM4.6 10.3h6.8v4.4H4.6z" fill="#3b4254"/></svg></span><span class="mbtn"><svg viewBox="0 0 16 16" width="16" height="16"><path d="M12.5 8v5.5H2.5V3.5H8" fill="none" stroke="#9097a6" stroke-width="1"/><path d="M7 9L13.8 1.8" stroke="#6b7385" stroke-width="1.3"/></svg></span></span><span class="mbtn more">···</span></td><td></td></tr>
</tbody>
</table>

<!-- dropdown -->
<div id="drop"><div>作废</div><div>退单</div><div>发送短信</div></div>
<div id="redbox"></div>

<!-- horizontal scrollbar -->
<div id="hscroll"><div class="th"></div>
  <svg class="abs" style="left:7px;top:4px" width="9" height="9" viewBox="0 0 9 9" fill="#505050"><path d="M6.500 0v9L1.500 4.500z"/></svg>
  <svg class="abs" style="right:4px;top:4px" width="9" height="9" viewBox="0 0 9 9" fill="#505050"><path d="M2.500 0v9l5-4.500z"/></svg>
</div>

<!-- pagination -->
<div class="pt" style="left:240px">共 93 条</div>
<div class="pg" style="left:303px;width:32px;color:#c5c8ce"><svg width="10" height="10" viewBox="0 0 10 10" fill="none" stroke="#b6bac3" stroke-width="1.300"><path d="M6.500 1.500L3 5l3.500 3.500"/></svg></div>
<div class="pg on" style="left:343px;width:33px">1</div>
<div class="pg" style="left:384px;width:32px">2</div>
<div class="pg" style="left:424px;width:32px">3</div>
<div class="pt" style="left:464px;width:32px;text-align:center;color:#c5c8ce;letter-spacing:1px">···</div>
<div class="pg" style="left:504px;width:32px">10</div>
<div class="pg" style="left:544px;width:32px"><svg width="10" height="10" viewBox="0 0 10 10" fill="none" stroke="#515a6e" stroke-width="1.300"><path d="M3.500 1.500L7 5 3.500 8.500"/></svg></div>
<div class="pg" style="left:594px;width:84px;text-align:left;padding-left:8px">10 条/页<svg class="abs" style="right:7px;top:10px" width="10" height="10" viewBox="0 0 12 12" fill="none" stroke="#808695" stroke-width="1.500"><path d="M1.500 3.500L6 8l4.500-4.500"/></svg></div>
<div class="pt" style="left:693px">跳至</div>
<div class="pg" style="left:733px;width:50px;text-align:left;padding-left:8px">1</div>
<div class="pt" style="left:802px">页</div>

<!-- browser scrollbar -->
<div id="vscroll"><div class="th"></div>
  <svg class="abs" style="left:5px;top:8px" width="10" height="7" viewBox="0 0 10 7" fill="#8a8a8a"><path d="M0 7h10L5 0z"/></svg>
  <svg class="abs" style="left:5px;top:888px" width="10" height="7" viewBox="0 0 10 7" fill="#505050"><path d="M0 0h10L5 7z"/></svg>
  <div class="abs" style="left:12px;top:266px;width:7px;height:60px;border-radius:4px;background:linear-gradient(#27332c,#2fb85a 50%,#27332c);box-shadow:0 0 0 1px #3a3f3c"></div>
  <div class="abs" style="left:9px;top:611px;width:11px;height:76px;border-radius:2px;background:#2b3440"></div>
</div>
<div id="topline"></div>
<div id="botline"></div>
</div>
</body>
</html>
